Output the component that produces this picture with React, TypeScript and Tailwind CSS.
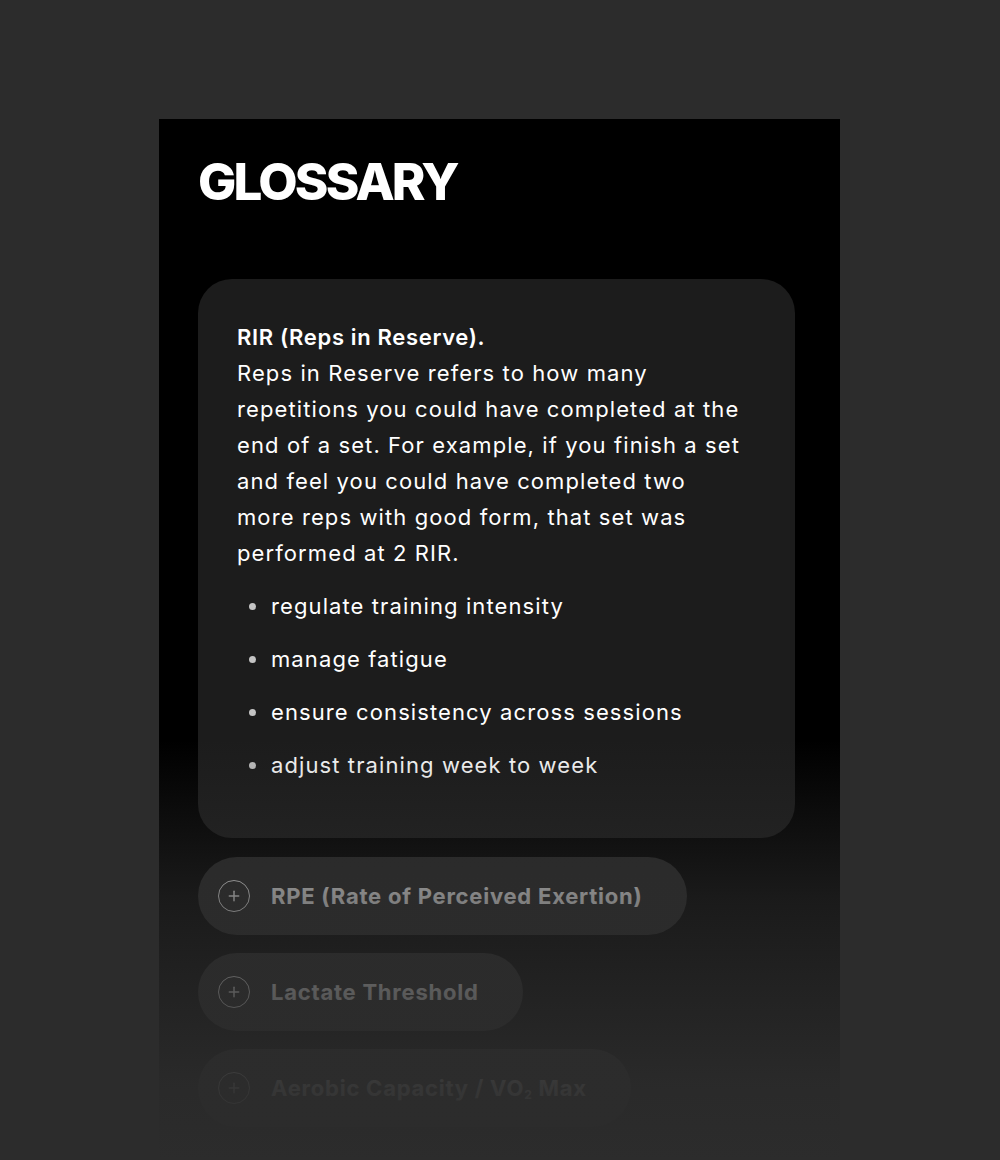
import { Plus } from "lucide-react";

const bodyLines = [
  "Reps in Reserve refers to how many",
  "repetitions you could have completed at the",
  "end of a set. For example, if you finish a set",
  "and feel you could have completed two",
  "more reps with good form, that set was",
  "performed at 2 RIR.",
];

const bullets = [
  "regulate training intensity",
  "manage fatigue",
  "ensure consistency across sessions",
  "adjust training week to week",
];

function CollapsedItem({ label }: { label: React.ReactNode }) {
  return (
    <div className="flex h-[78px] w-fit items-center rounded-full bg-[#2a2a2a] pl-[20px] pr-[44px]">
      <span className="flex h-[32px] w-[32px] flex-shrink-0 items-center justify-center rounded-full border-[1.75px] border-white">
        <Plus size={16} strokeWidth={2.25} className="text-white" />
      </span>
      <span className="ml-[21px] whitespace-nowrap text-[22px] font-bold tracking-[0.035em] text-white">
        {label}
      </span>
    </div>
  );
}

export default function App() {
  return (
    <div className="min-h-[1160px] bg-[#2c2c2c] pl-[159px] pt-[119px] font-['Inter',sans-serif]">
      <div className="relative h-[1041px] w-[681px] overflow-hidden bg-black px-[39px] pt-[37px]">
        <h1 className="m-0 text-[51px] font-extrabold leading-none tracking-[-0.055em] text-white">
          GLOSSARY
        </h1>

        <div className="mt-[72px] flex flex-col gap-[19px]">
          <div className="w-[597px] rounded-[34px] bg-[#1c1c1c] px-[39px] pb-[55px] pt-[40px] text-[22px] leading-[36px] tracking-[0.05em] text-white">
            <p className="m-0 whitespace-nowrap">
              <strong className="font-semibold tracking-[0.03em]">RIR (Reps in Reserve).</strong>
              {bodyLines.map((l) => (
                <span key={l} className="block">
                  {l}
                </span>
              ))}
            </p>
            <ul className="m-0 mt-[17px] flex list-none flex-col gap-[17px] p-0">
              {bullets.map((b) => (
                <li key={b} className="flex items-center">
                  <span className="ml-[12px] h-[7px] w-[7px] flex-shrink-0 rounded-full bg-[#c4c4c4]" />
                  <span className="ml-[15px]">{b}</span>
                </li>
              ))}
            </ul>
          </div>

          <div className="flex flex-col gap-[18px]">
            <CollapsedItem label="RPE (Rate of Perceived Exertion)" />
            <CollapsedItem label="Lactate Threshold" />
            <CollapsedItem
              label={
                <>
                  Aerobic Capacity / VO<sub className="text-[12px]">2</sub> Max
                </>
              }
            />
          </div>
        </div>

        {/* fade the lower list into the page */}
        <div className="pointer-events-none absolute inset-x-0 bottom-0 h-[420px] bg-[linear-gradient(to_bottom,rgba(44,44,44,0)_0%,rgba(44,44,44,0.4)_25%,rgba(44,44,44,0.6)_38%,rgba(44,44,44,0.78)_60%,rgba(44,44,44,0.95)_82%,#2c2c2c_100%)]" />
      </div>
    </div>
  );
}
